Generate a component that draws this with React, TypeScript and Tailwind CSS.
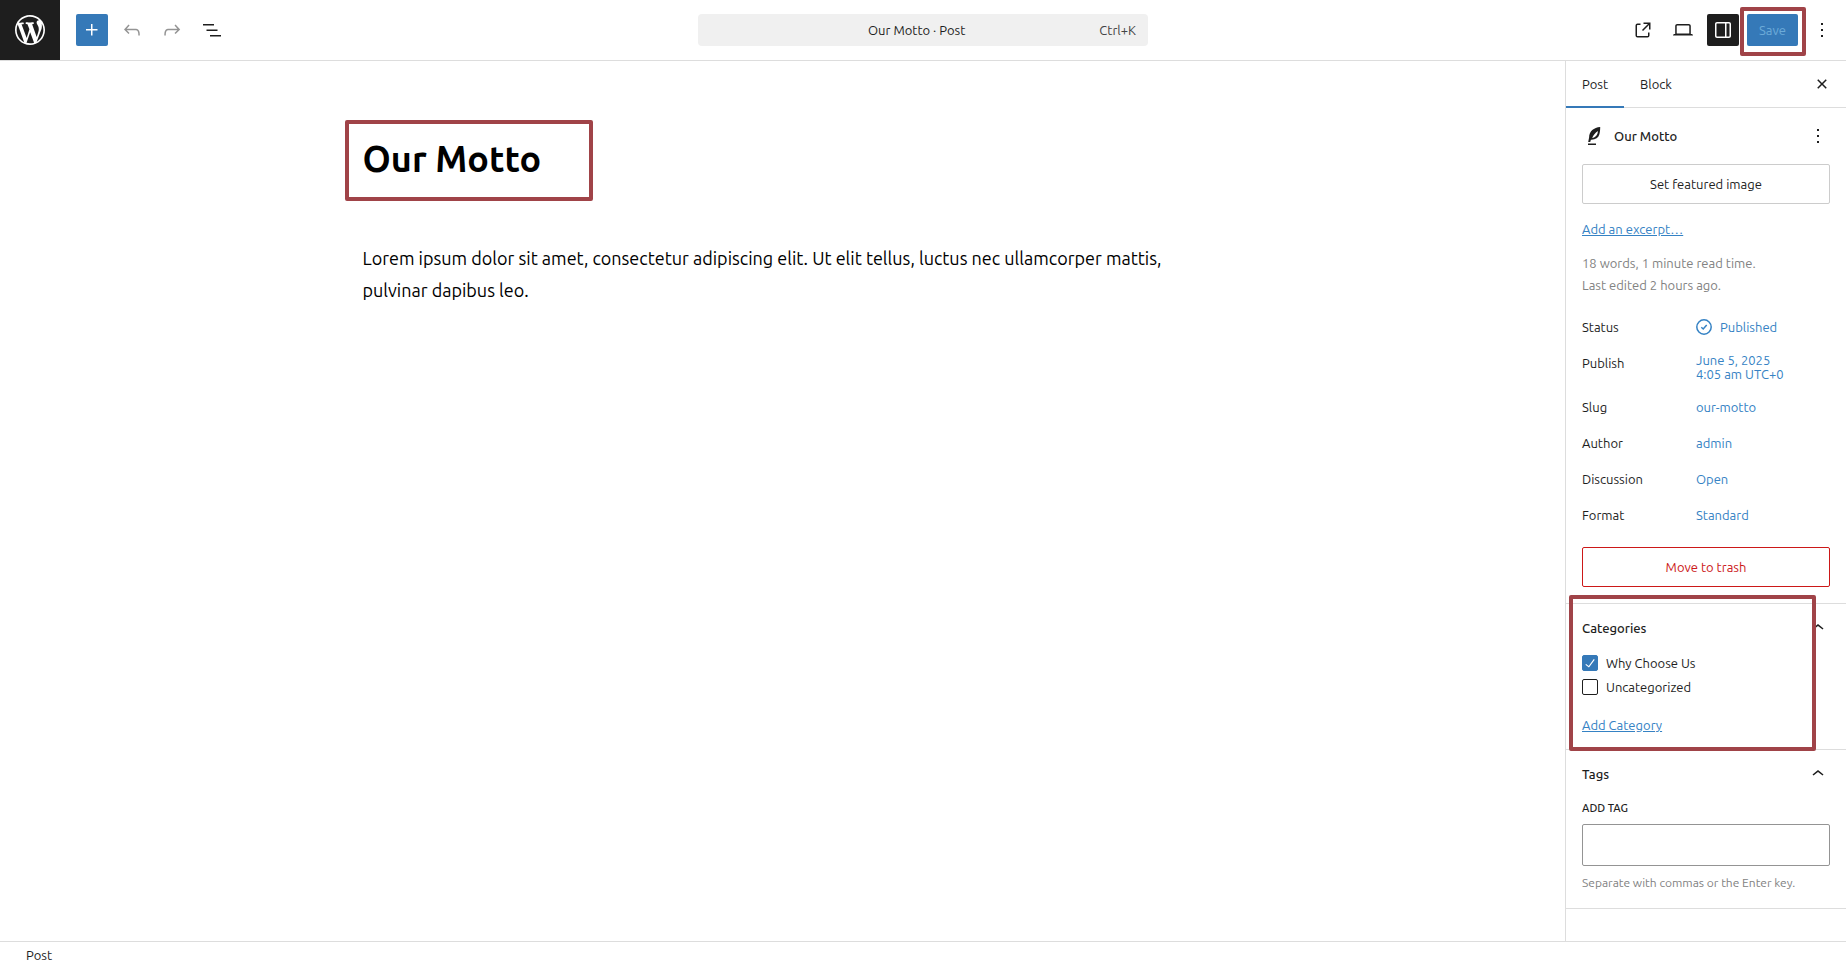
import { ReactNode, useState } from 'react';

const ICONS = {
  wordpress:
    'M20 10c0-5.51-4.49-10-10-10C4.48 0 0 4.49 0 10c0 5.52 4.48 10 10 10 5.51 0 10-4.48 10-10zM7.78 15.37L4.37 6.22c.55-.02 1.17-.08 1.17-.08.5-.06.44-1.13-.06-1.11 0 0-1.45.11-2.37.11-.18 0-.37 0-.58-.01C4.12 2.69 6.87 1.11 10 1.11c2.33 0 4.45.87 6.05 2.34-.68-.11-1.65.39-1.65 1.58 0 .74.45 1.36.9 2.1.35.61.55 1.36.55 2.46 0 1.49-1.4 5-1.4 5l-3.03-8.37c.54-.02.82-.17.82-.17.5-.05.44-1.25-.06-1.22 0 0-1.44.12-2.38.12-.87 0-2.33-.12-2.33-.12-.5-.03-.56 1.2-.06 1.22l.92.08 1.26 3.41zM17.41 10c.24-.64.74-1.87.43-4.25.7 1.29 1.05 2.71 1.05 4.25 0 3.29-1.73 6.24-4.4 7.78.97-2.59 1.94-5.2 2.92-7.78zM6.1 18.09C3.12 16.65 1.11 13.53 1.11 10c0-1.3.23-2.48.72-3.59C3.25 10.3 4.67 14.2 6.1 18.09zm4.03-6.63l2.58 6.98c-.86.29-1.76.45-2.71.45-.79 0-1.57-.11-2.29-.33.81-2.38 1.62-4.74 2.42-7.1z',
  plus: 'M11 12.5V17.5H12.5V12.5H17.5V11H12.5V6H11V11H6V12.5H11Z',
  undo: 'M18.3 11.7c-.6-.6-1.4-.9-2.3-.9H6.7l2.9-3.3-1.1-1-4.5 5L8.5 16l1-1-2.7-2.7H16c.5 0 .9.2 1.3.5 1 1 1 3.4 1 4.5v.3h1.5v-.2c0-1.5 0-4.3-1.5-5.7z',
  redo: 'M15.6 6.5l-1.1 1 2.9 3.3H8c-.9 0-1.7.3-2.3.9-1.4 1.5-1.4 4.2-1.4 5.6v.2h1.5v-.3c0-1.1 0-3.5 1-4.5.3-.3.7-.5 1.3-.5h9.2L14.5 15l1.1 1.1 4.6-4.6-4.6-5z',
  list: 'M3 6h11v1.5H3V6Zm3.5 5.5h11V13h-11v-1.5ZM21 17H10v1.5h11V17Z',
  external:
    'M19.5 4.5h-7V6h4.44l-5.97 5.97 1.06 1.06L18 7.06v4.44h1.5v-7Zm-13 1a2 2 0 0 0-2 2v10a2 2 0 0 0 2 2h10a2 2 0 0 0 2-2v-3H17v3a.5.5 0 0 1-.5.5h-10a.5.5 0 0 1-.5-.5v-10a.5.5 0 0 1 .5-.5h3V5.5h-3Z',
  desktop:
    'M20.5 16h-.7V8c0-1.1-.9-2-2-2H6.2c-1.1 0-2 .9-2 2v8h-.7c-.8 0-1.5.7-1.5 1.5h20c0-.8-.7-1.5-1.5-1.5zM5.7 8c0-.3.2-.5.5-.5h11.6c.3 0 .5.2.5.5v7.6H5.7V8z',
  drawer:
    'M18 4H6c-1.1 0-2 .9-2 2v12c0 1.1.9 2 2 2h12c1.1 0 2-.9 2-2V6c0-1.1-.9-2-2-2zm-4 14.5H6c-.3 0-.5-.2-.5-.5V6c0-.3.2-.5.5-.5h8v13zm4.5-.5c0 .3-.2.5-.5.5h-2.5v-13H18c.3 0 .5.2.5.5v12z',
  more: 'M13 19h-2v-2h2v2zm0-6h-2v-2h2v2zm0-6h-2V5h2v2z',
  close:
    'M12 13.06l3.712 3.713 1.061-1.06L13.061 12l3.712-3.712-1.06-1.06L12 10.938 8.288 7.227l-1.061 1.06L10.939 12l-3.712 3.712 1.06 1.061L12 13.061z',
  chevronUp: 'M6.5 12.4L12 8l5.5 4.4-.9 1.2L12 10l-4.5 3.6-1-1.2z',
  check: 'M16.7 7.1l-6.3 8.5-3.3-2.5-.9 1.2 4.5 3.4L17.9 8z',
  feather:
    'M18.2 3.1C11.8 3.5 7.2 7.5 7.1 13.4L6.2 18h2l.7-2.2c4.5.2 7.4-1.7 8.4-5.2.7-2.4.9-5 .9-7.5zM10.200 14c1.100-2.700 2.900-5 5.700-6.900-.2 4-2.200 6.500-5.700 6.900zM6 19.500h8V21H6z',
};

type IconProps = { name: keyof typeof ICONS; className?: string; viewBox?: string };

function Icon({ name, className = 'size-6', viewBox = '0 0 24 24' }: IconProps) {
  return (
    <svg viewBox={viewBox} className={`shrink-0 ${className}`} fill="currentColor" fillRule="evenodd" aria-hidden="true">
      <path d={ICONS[name]} />
    </svg>
  );
}

type IconButtonProps = { label: string; icon: keyof typeof ICONS; className?: string; disabled?: boolean };

function IconButton({ label, icon, className = '', disabled }: IconButtonProps) {
  return (
    <button
      type="button"
      aria-label={label}
      disabled={disabled}
      className={`flex size-8 shrink-0 items-center justify-center rounded-xs disabled:text-[#949494] ${className}`}
    >
      <Icon name={icon} />
    </button>
  );
}

function Highlight({ className }: { className: string }) {
  return <div className={`pointer-events-none absolute z-10 rounded-xs border-4 border-[#a04348] ${className}`} />;
}

function Row({ label, children }: { label: string; children: ReactNode }) {
  return (
    <div className="flex min-h-8 items-start">
      <span className="w-[114px] shrink-0 leading-8">{label}</span>
      <button type="button" className="flex min-h-8 items-center gap-2 text-left leading-[14px] text-[#3582c4]">
        {children}
      </button>
    </div>
  );
}

function Panel({ title, children }: { title: string; children: ReactNode }) {
  return (
    <section className="relative border-b border-[#ddd] px-4 pb-4">
      <h2>
        <button type="button" className="flex h-12 w-full items-center justify-between text-left font-medium">
          {title}
          <Icon name="chevronUp" />
        </button>
      </h2>
      {children}
    </section>
  );
}

type CheckProps = { label: string; checked: boolean; onChange: () => void };

function Check({ label, checked, onChange }: CheckProps) {
  return (
    <label className="flex h-4 items-center gap-2">
      <span className="relative flex size-4">
        <input
          type="checkbox"
          checked={checked}
          onChange={onChange}
          className="size-4 appearance-none rounded-xs border border-[#1e1e1e] checked:border-[#3579b8] checked:bg-[#3579b8]"
        />
        {checked && (
          <Icon name="check" viewBox="2 2 20 20" className="pointer-events-none absolute inset-0 size-4 text-white" />
        )}
      </span>
      {label}
    </label>
  );
}

const details = [
  { label: 'Slug', value: 'our-motto' },
  { label: 'Author', value: 'admin' },
  { label: 'Discussion', value: 'Open' },
  { label: 'Format', value: 'Standard' },
];

function Header() {
  return (
    <header className="grid h-[61px] shrink-0 grid-cols-[1fr_auto_1fr] items-center border-b border-[#ddd]">
      <div className="flex items-center gap-2">
        <a href="#posts" aria-label="View Posts" className="mr-2 flex size-[60px] items-center justify-center bg-[#1e1e1e] text-white">
          <Icon name="wordpress" className="size-9" viewBox="-2 -2 24 24" />
        </a>
        <IconButton label="Block Inserter" icon="plus" className="bg-[#3579b8] text-white" />
        <IconButton label="Undo" icon="undo" disabled />
        <IconButton label="Redo" icon="redo" disabled />
        <IconButton label="Document Overview" icon="list" />
      </div>
      <button type="button" className="flex h-8 w-[450px] items-center rounded bg-[#f0f0f0] px-3">
        <span className="flex-1 pl-6">Our Motto · Post</span>
        <span className="text-[#444]">Ctrl+K</span>
      </button>
      <div className="flex items-center justify-end gap-2 pr-2">
        <IconButton label="View Post" icon="external" />
        <IconButton label="View" icon="desktop" />
        <IconButton label="Settings" icon="drawer" className="bg-[#1e1e1e] text-white" />
        <div className="relative">
          <button type="button" className="block h-8 w-[51px] rounded-xs bg-[#3579b8] text-[#6cabd8]">
            Save
          </button>
          <Highlight className="-top-[7px] -right-2 -bottom-[10px] -left-[7px]" />
        </div>
        <IconButton label="Options" icon="more" />
      </div>
    </header>
  );
}

function Sidebar() {
  const [categories, setCategories] = useState([
    { name: 'Why Choose Us', checked: true },
    { name: 'Uncategorized', checked: false },
  ]);

  const toggle = (name: string) => {
    setCategories(categories.map((c) => (c.name === name ? { ...c, checked: !c.checked } : c)));
  };

  return (
    <aside className="w-[281px] shrink-0 border-l border-[#ddd]">
      <div className="flex h-[47px] items-stretch border-b border-[#ddd]">
        <button type="button" className="-mb-px border-b-2 border-[#3579b8] px-4">
          Post
        </button>
        <button type="button" className="px-4">
          Block
        </button>
        <IconButton label="Close Settings" icon="close" className="mr-2 ml-auto self-center" />
      </div>

      <div className="border-b border-[#ddd] px-4 pt-4 pb-4">
        <div className="flex h-6 items-center gap-2">
          <Icon name="feather" />
          <h2 className="flex-1 font-medium">Our Motto</h2>
          <button type="button" aria-label="Actions">
            <Icon name="more" />
          </button>
        </div>
        <button type="button" className="mt-4 h-10 w-full rounded-xs border border-[#ccc]">
          Set featured image
        </button>
        <a href="#excerpt" className="mt-[15px] block text-[#3582c4] underline">
          Add an excerpt…
        </a>
        <p className="mt-[13px] leading-[22px] text-[#828282]">
          18 words, 1 minute read time.
          <br />
          Last edited 2 hours ago.
        </p>
        <div className="mt-[15px] flex flex-col gap-1">
          <Row label="Status">
            <svg viewBox="0 0 16 16" className="size-4" fill="none" stroke="currentColor" strokeWidth="1.5" aria-hidden="true">
              <circle cx="8" cy="8" r="7.2" />
              <path d="M5.3 8.3l1.9 1.7 3.5-3.9" />
            </svg>
            Published
          </Row>
          <Row label="Publish">
            <span className="py-[6px]">
              June 5, 2025
              <br />
              4:05 am UTC+0
            </span>
          </Row>
          {details.map((row) => (
            <Row key={row.label} label={row.label}>
              {row.value}
            </Row>
          ))}
        </div>
        <button type="button" className="mt-4 h-10 w-full rounded-xs border border-[#cc1818] text-[#cc1818]">
          Move to trash
        </button>
      </div>

      <Panel title="Categories">
        <div className="mt-[3px] flex flex-col gap-2">
          {categories.map((c) => (
            <Check key={c.name} label={c.name} checked={c.checked} onChange={() => toggle(c.name)} />
          ))}
        </div>
        <a href="#add-category" className="mt-[22px] block leading-4 text-[#3582c4] underline">
          Add Category
        </a>
        <Highlight className="-top-[9px] right-[30px] -bottom-[2px] left-[3px]" />
      </Panel>

      <Panel title="Tags">
        <label htmlFor="add-tag" className="block text-[11px] font-medium uppercase">
          Add Tag
        </label>
        <input id="add-tag" type="text" className="mt-[6px] block h-[42px] w-full rounded-xs border border-[#949494] px-2" />
        <p className="mt-2 text-[12px] leading-[18px] text-[#828282]">Separate with commas or the Enter key.</p>
      </Panel>
    </aside>
  );
}

export default function App() {
  return (
    <div className="flex min-h-screen flex-col bg-white font-['Ubuntu','Noto_Sans',sans-serif] text-[13px] leading-5 text-[#1e1e1e]">
      <Header />
      <div className="flex flex-1">
        <main className="flex-1">
          <div className="mx-auto max-w-[840px] pt-[74px] text-black">
            <div className="relative">
              <h1 className="text-[36px] leading-[48px] font-semibold">Our Motto</h1>
              <Highlight className="-top-[15px] -bottom-[18px] -left-[18px] w-[248px]" />
            </div>
            <p className="mt-[59px] text-[18px] leading-8">
              Lorem ipsum dolor sit amet, consectetur adipiscing elit. Ut elit tellus, luctus nec ullamcorper mattis, pulvinar
              dapibus leo.
            </p>
          </div>
        </main>
        <Sidebar />
      </div>
      <footer className="flex h-[25px] shrink-0 items-center border-t border-[#ddd] px-[26px] pt-px">Post</footer>
    </div>
  );
}
